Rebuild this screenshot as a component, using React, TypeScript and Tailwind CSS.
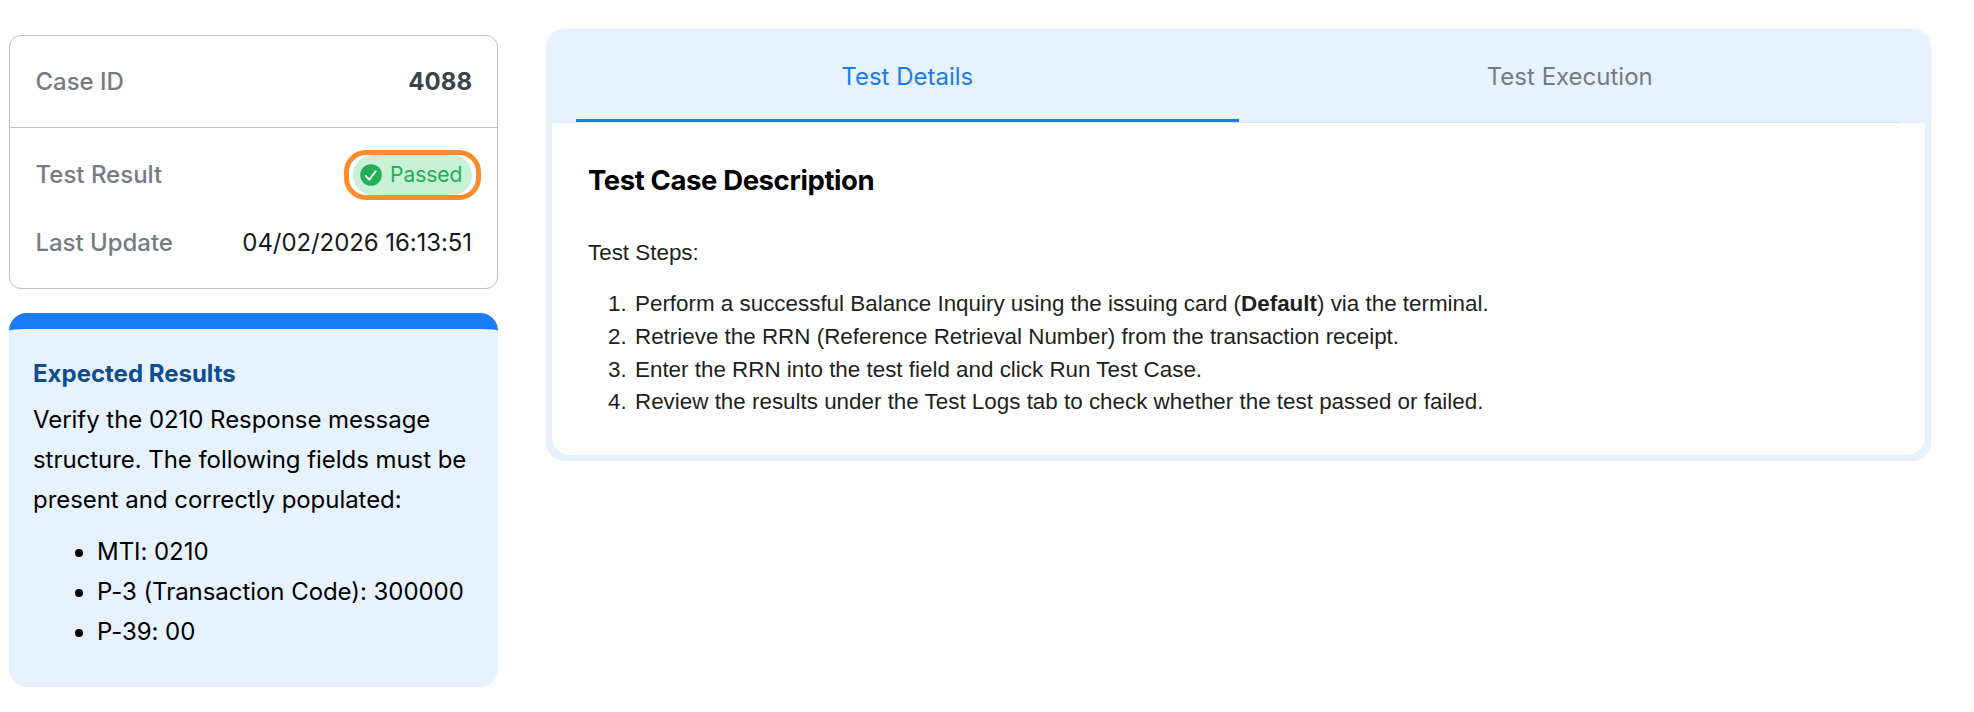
const steps = [
  <>
    Perform a successful Balance Inquiry using the issuing card (<strong>Default</strong>) via the terminal.
  </>,
  <>Retrieve the RRN (Reference Retrieval Number) from the transaction receipt.</>,
  <>Enter the RRN into the test field and click Run Test Case.</>,
  <>Review the results under the Test Logs tab to check whether the test passed or failed.</>,
];

const fields = ['MTI: 0210', 'P-3 (Transaction Code): 300000', 'P-39: 00'];

function PassedBadge() {
  return (
    <div className="-mr-[9px] flex h-[50px] w-[137px] items-center justify-center rounded-[22px] border-[5px] border-[#ff8b2a]">
      <span className="flex h-10 w-[119px] items-center rounded-[20px] bg-[#c9f1d6] pl-[7px] text-[#22ad57]">
        <svg viewBox="0 0 22 22" className="mr-2 h-[22px] w-[22px] shrink-0">
          <circle cx="11" cy="11" r="10.8" fill="#22ad57" />
          <path d="M5.8 12 L9.3 15.6 L15.8 7.2" fill="none" stroke="#fff" strokeWidth="1.9" strokeLinecap="round" strokeLinejoin="round" />
        </svg>
        <span className="whitespace-nowrap text-[21px] leading-10">Passed</span>
      </span>
    </div>
  );
}

function Summary() {
  return (
    <section className="h-[254px] rounded-xl border border-[#bfbfbf] text-2xl">
      <div className="flex h-[92px] items-center justify-between border-b border-[#bfbfbf] pl-[25.5px] pr-[25px]">
        <span className="font-medium tracking-[-0.04px] text-[#757b82]">Case ID</span>
        <span className="font-bold text-[#3a424b]">4088</span>
      </div>
      <div className="flex h-[94px] items-center justify-between pl-[25.5px] pr-[25px]">
        <span className="font-medium text-[#757b82]">Test Result</span>
        <PassedBadge />
      </div>
      <div className="flex h-[42px] items-center justify-between pl-[25.5px] pr-[25px]">
        <span className="font-medium tracking-[-0.04px] text-[#757b82]">Last Update</span>
        <span className="tracking-[-0.08px] text-[#16191d]">04/02/2026 16:13:51</span>
      </div>
    </section>
  );
}

function ExpectedResults() {
  return (
    <section className="mt-6 h-[374px] rounded-[18px] border-t-[16px] border-[#1a7cf2] bg-[#e6f2fe] px-6 pt-[25px] text-2xl leading-10 text-black">
      <h2 className="font-bold text-[#0f4c92]">Expected Results</h2>
      <p className="mt-1.5 whitespace-nowrap tracking-[-0.05px]">
        Verify the 0210 Response message
        <br />
        structure. The following fields must be
        <br />
        present and correctly populated:
      </p>
      <ul className="mt-3 list-disc whitespace-nowrap pl-16 tracking-[-0.05px]">
        {fields.map((f) => (
          <li key={f}>{f}</li>
        ))}
      </ul>
    </section>
  );
}

export default function App() {
  return (
    <main className="flex h-[712px] w-[1974px] items-start bg-white font-['Inter',sans-serif]">
      <aside className="ml-[9px] mt-[35px] w-[489px]">
        <Summary />
        <ExpectedResults />
      </aside>
      <section className="ml-12 mt-[29px] h-[432px] w-[1385px] rounded-[18px] bg-[#e6f2fe] px-1.5 pb-1.5">
        <nav className="mx-6 flex h-[94px] border-b border-[#dfdfe6] text-2xl">
          <button className="flex-1 border-b-[3px] border-[#1a7cf2] pt-1.5 text-[#1a7cf2]">Test Details</button>
          <button className="flex-1 border-b-[3px] border-transparent pt-1.5 text-[#757b7f]">Test Execution</button>
        </nav>
        <div className="h-[332px] rounded-b-[18px] bg-white px-9 pt-[37px]">
          <h1 className="text-[27.5px] font-bold leading-10 tracking-[-0.4px] text-black">Test Case Description</h1>
          <div className="font-['Liberation_Sans',Arial,sans-serif] text-[22.4px] leading-[32.8px] text-[#1d1f20]">
            <p className="mt-[37.3px]">Test Steps:</p>
            <ol className="mt-[18px] whitespace-nowrap pl-5">
              {steps.map((s, i) => (
                <li key={i} className="flex">
                  <span className="w-[27px] shrink-0">{i + 1}.</span>
                  <span>{s}</span>
                </li>
              ))}
            </ol>
          </div>
        </div>
      </section>
    </main>
  );
}
